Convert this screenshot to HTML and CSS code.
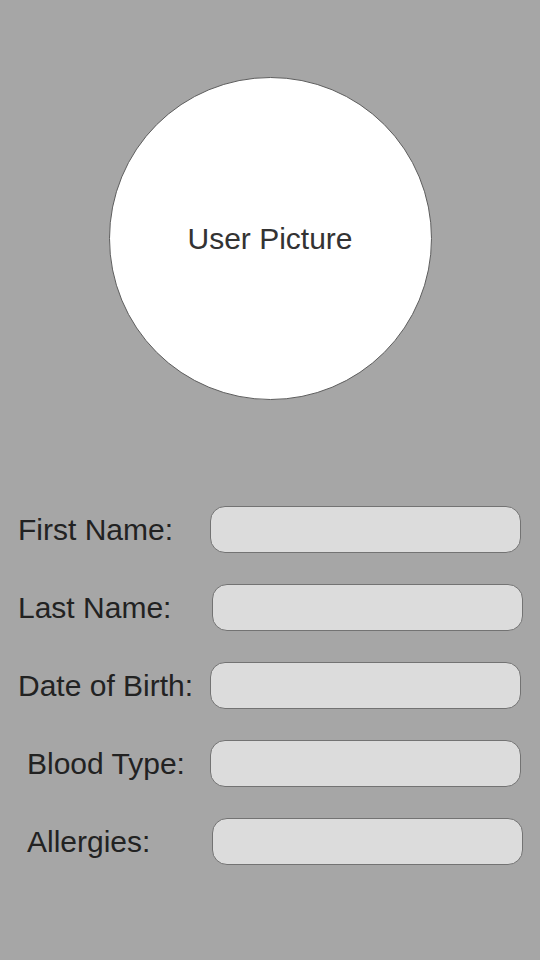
FILE: index.html
```html
<!DOCTYPE html>
<html>
<head>
    <title>Profile</title>
    <link rel="stylesheet" href="styles.css">
</head>
<body>
    <div class="picture-area">
        <div class="user-picture">User Picture</div>
    </div>

    <div class="form">
        <div class="row">
            <label class="label">First Name:</label>
            <div class="field"></div>
        </div>
        <div class="row">
            <label class="label">Last Name:</label>
            <div class="field field-shift"></div>
        </div>
        <div class="row">
            <label class="label">Date of Birth:</label>
            <div class="field"></div>
        </div>
        <div class="row">
            <label class="label label-indent">Blood Type:</label>
            <div class="field"></div>
        </div>
        <div class="row">
            <label class="label label-indent">Allergies:</label>
            <div class="field field-shift"></div>
        </div>
    </div>
</body>
</html>
```

FILE: styles.css
```css
body {
    margin: 0;
    background-color: #a6a6a6;
    font-family: "Liberation Sans", Arial, sans-serif;
    width: 540px;
    height: 960px;
}

.picture-area {
    display: flex;
    justify-content: center;
    padding-top: 77px;
}

.user-picture {
    width: 323px;
    height: 323px;
    box-sizing: border-box;
    border: 1px solid #5e5e5e;
    border-radius: 50%;
    background-color: #fff;
    color: #333;
    font-size: 30px;
    display: flex;
    align-items: center;
    justify-content: center;
}

.form {
    display: flex;
    flex-direction: column;
    gap: 31px;
    padding: 106px 19px 0 18px;
}

.row {
    display: flex;
    align-items: center;
}

.label {
    width: 192px;
    flex-shrink: 0;
    font-size: 30px;
    color: #222;
    white-space: nowrap;
}

.label-indent {
    padding-left: 9px;
    box-sizing: border-box;
}

.field {
    flex: 1;
    height: 47px;
    box-sizing: border-box;
    border: 1px solid #737373;
    border-radius: 15px;
    background-color: #dcdcdc;
}

.field-shift {
    margin-left: 2px;
    margin-right: -2px;
}
```
